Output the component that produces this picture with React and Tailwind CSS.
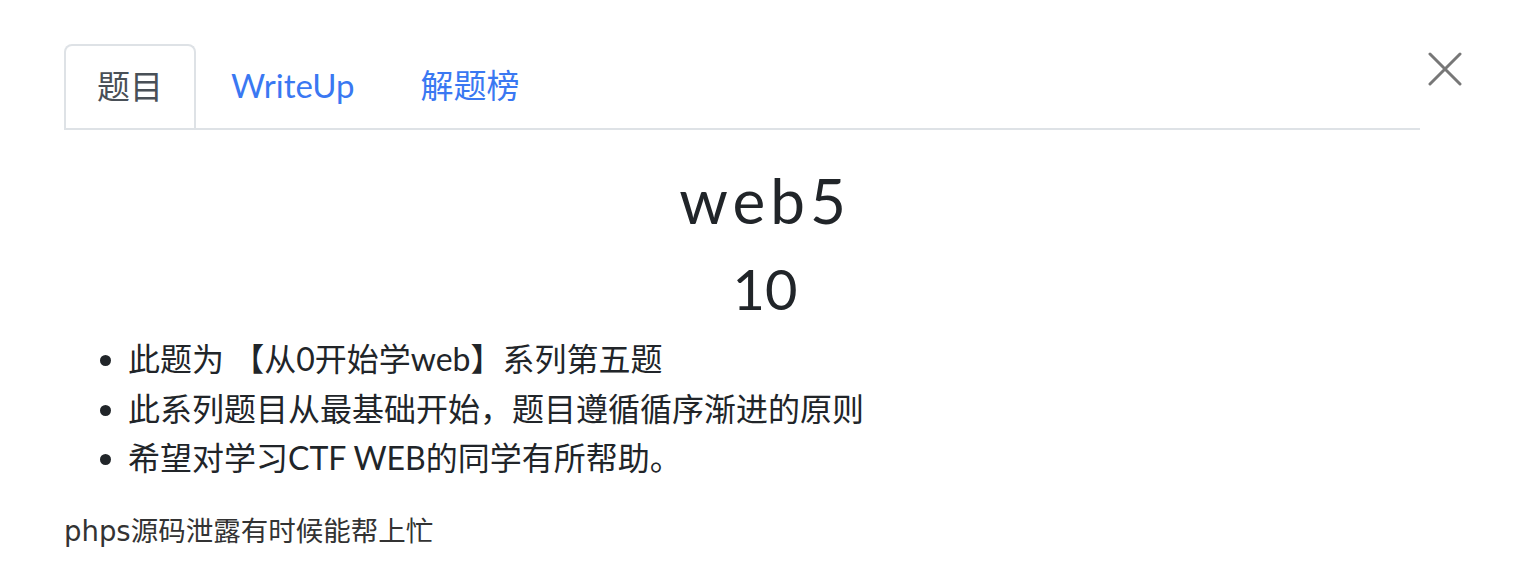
import React from 'react';

const App = () => {
    const items = [
        '此题为 【从0开始学web】系列第五题',
        '此系列题目从最基础开始，题目遵循循序渐进的原则',
        '希望对学习CTF WEB的同学有所帮助。',
    ];

    return (
        <div className="min-h-screen bg-white text-[#212529] font-['Lato','Noto_Sans_CJK_SC',sans-serif] pl-[64px] pr-[56px] pt-[44px]">
            {/* header: tabs + close */}
            <div className="flex items-start">
                <ul className="flex-1 flex border-b-2 border-[#dee2e6]">
                    <li className="-mb-[2px] px-[31px] h-[84px] flex items-center border-2 border-b-0 border-[#dee2e6] rounded-t-[8px] bg-white text-[33px] text-[#495057]">
                        题目
                    </li>
                    <li className="pl-[35px] pr-[33px] h-[84px] flex items-center text-[33px] text-[#3a78f2]">WriteUp</li>
                    <li className="px-[33px] h-[84px] flex items-center text-[33px] text-[#3a78f2]">解题榜</li>
                </ul>
                <button className="ml-[8px] mr-[4px] mt-[8px] w-[34px] h-[34px] text-[#777]">
                    <svg viewBox="0 0 34 34" width="34" height="34" stroke="currentColor" strokeWidth="3" strokeLinecap="round">
                        <path d="M2 2 L32 32 M32 2 L2 32" />
                    </svg>
                </button>
            </div>

            <div className="text-center mt-[34px]">
                <h2 className="text-[62px] leading-[72px] tracking-[5px]">web5</h2>
                <h3 className="text-[56px] leading-[66px] mt-[20px]">10</h3>
            </div>

            <ul className="list-disc pl-[64px] mt-[12px] text-[32px] leading-[49.5px]">
                {items.map((t) => (
                    <li key={t}>{t}</li>
                ))}
            </ul>

            <p className="mt-[28px] text-[27.5px] leading-[40px] font-['DejaVu_Sans','Noto_Sans_CJK_SC',sans-serif] text-[#333]">
                phps源码泄露有时候能帮上忙
            </p>
        </div>
    );
};

export default App;
